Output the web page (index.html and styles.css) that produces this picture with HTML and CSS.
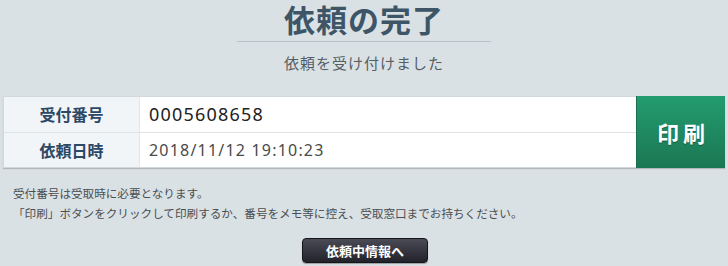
FILE: index.html
```html
<!DOCTYPE html>
<html lang="ja">
<head>
<meta charset="utf-8">
<link rel="stylesheet" href="styles.css">
</head>
<body>
<div class="page">
  <h1 class="title">依頼の完了</h1>
  <div class="rule"></div>
  <p class="subtitle">依頼を受け付けました</p>
  <div class="receipt">
    <div class="table">
      <div class="row">
        <div class="label">受付番号</div>
        <div class="value number">0005608658</div>
      </div>
      <div class="row">
        <div class="label">依頼日時</div>
        <div class="value date">2018/11/12 19:10:23</div>
      </div>
    </div>
    <button class="print">印刷</button>
  </div>
  <div class="notes">
    <p>受付番号は受取時に必要となります。</p>
    <p>「印刷」ボタンをクリックして印刷するか、番号をメモ等に控え、受取窓口までお持ちください。</p>
  </div>
  <div class="actions">
    <button class="next">依頼中情報へ</button>
  </div>
</div>
</body>
</html>
```
FILE: styles.css
```css
html, body {
  margin: 0;
  padding: 0;
  background: #dae1e4;
}
body {
  font-family: "Noto Sans CJK JP", "Noto Sans", sans-serif;
  width: 728px;
  height: 266px;
  overflow: hidden;
}
.page {
  display: flex;
  flex-direction: column;
}
.title {
  margin: 0;
  padding-top: 2px;
  height: 36px;
  line-height: 34px;
  text-align: center;
  font-size: 31px;
  font-weight: 700;
  color: #3e5567;
  letter-spacing: 1px;
}
.rule {
  align-self: center;
  width: 254px;
  height: 1px;
  background: #b9c3c9;
  margin-top: 3px;
}
.subtitle {
  margin: 0;
  height: 54px;
  line-height: 42px;
  text-align: center;
  font-size: 15px;
  color: #555d63;
  letter-spacing: 1px;
}
.receipt {
  display: flex;
  margin-left: 3px;
  width: 722px;
  height: 72px;
  box-shadow: 0 1px 1px rgba(0,0,0,0.18);
}
.table {
  flex: 1;
  display: flex;
  flex-direction: column;
  border: 1px solid #d2d9de;
  border-right: none;
}
.row {
  flex: 1;
  display: flex;
}
.row + .row {
  border-top: 1px solid #dde3e7;
}
.label {
  width: 135px;
  background: #f2f5f8;
  border-right: 1px solid #e1e6ea;
  color: #2b4867;
  font-weight: 700;
  font-size: 16px;
  display: flex;
  align-items: center;
  justify-content: center;
}
.value {
  flex: 1;
  background: #fff;
  display: flex;
  align-items: center;
  padding-left: 9px;
  font-family: "Noto Sans", "Noto Sans CJK JP", sans-serif;
}
.number {
  font-size: 18px;
  letter-spacing: 1.2px;
  color: #222;
}
.date {
  font-size: 16px;
  letter-spacing: 1.2px;
  color: #4a4a4a;
}
.print {
  width: 89px;
  border: none;
  border-left: 1px solid #1b6e4f;
  background: linear-gradient(#239c70, #1b7753);
  color: #fff;
  font-family: "Noto Sans CJK JP", sans-serif;
  font-weight: 700;
  font-size: 22px;
  letter-spacing: 4px;
  padding: 0 0 0 4px;
  text-shadow: 0 1px 1px rgba(0,0,0,0.35);
}
.notes {
  margin-top: 15px;
  padding-left: 13px;
  font-size: 11.6px;
  color: #4a4f53;
}
.notes p {
  margin: 0;
  line-height: 20px;
}
.actions {
  display: flex;
  justify-content: center;
  margin-top: 15px;
}
.next {
  width: 126px;
  height: 25px;
  border: 1px solid #15151c;
  border-radius: 4px;
  background: linear-gradient(#4b4b56, #22222b);
  color: #fff;
  font-family: "Noto Sans CJK JP", sans-serif;
  font-weight: 700;
  font-size: 13px;
  padding: 0;
  margin-left: 2px;
  box-shadow: 0 1px 1px rgba(0,0,0,0.3);
}
```
